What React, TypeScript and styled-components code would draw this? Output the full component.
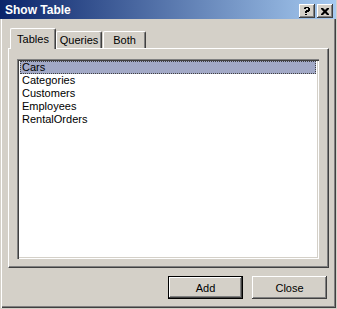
import React, { useState } from "react";
import styled, { createGlobalStyle } from "styled-components";

const GlobalStyle = createGlobalStyle`
  html, body {
    margin: 0;
    padding: 0;
    background: #d4d0c8;
  }
  body {
    font-family: "Liberation Sans", Arial, sans-serif;
    font-size: 11px;
    color: #000;
  }
`;

const Window = styled.div`
  width: 336px;
  height: 308px;
  box-sizing: border-box;
  background: #d4d0c8;
  display: flex;
  flex-direction: column;
  box-shadow: inset 1px 0 #d4d0c8, inset 2px 0 #fff, inset -1px -1px #404040,
    inset -2px -2px #808080;
`;

const TitleBar = styled.div`
  height: 19px;
  display: flex;
  align-items: center;
  padding-left: 5px;
  padding-right: 3px;
  background: linear-gradient(to right, #0a246a, #a6caf0);
  color: #fff;
  font-weight: bold;
  font-size: 12px;
`;

const Title = styled.span`
  flex: 1;
  margin-top: 1px;
`;

const CaptionButtons = styled.div`
  display: flex;
  gap: 2px;
  margin-top: 3px;
`;

const CaptionButton = styled.div`
  width: 16px;
  height: 14px;
  box-sizing: border-box;
  background: #d4d0c8;
  display: flex;
  align-items: center;
  justify-content: center;
  box-shadow: inset -1px -1px #404040, inset 1px 1px #fff,
    inset -2px -2px #808080;
  svg {
    display: block;
  }
`;

const Body = styled.div`
  flex: 1;
  display: flex;
  flex-direction: column;
  padding: 9px 8px 0 8px;
`;

const TabRow = styled.div`
  display: flex;
  align-items: flex-end;
  padding-left: 2px;
  height: 20px;
  position: relative;
  z-index: 1;
`;

const Tab = styled.div<{ $active?: boolean; $w: number; $ml?: number }>`
  width: ${(p) => p.$w}px;
  margin-left: ${(p) => p.$ml || 0}px;
  height: ${(p) => (p.$active ? 21 : 17)}px;
  margin-bottom: ${(p) => (p.$active ? -1 : 0)}px;
  box-sizing: border-box;
  background: #d4d0c8;
  border-top: 1px solid #fff;
  border-left: 1px solid #fff;
  border-right: 1px solid #404040;
  border-radius: 2px 2px 0 0;
  box-shadow: inset -1px 0 #808080;
  display: flex;
  justify-content: center;
  padding-top: ${(p) => (p.$active ? 4 : 2)}px;
  font-size: 11px;
  cursor: default;
`;

const Panel = styled.div`
  width: 321px;
  height: 220px;
  box-sizing: border-box;
  border-top: 1px solid #fff;
  border-left: 1px solid #fff;
  border-right: 1px solid #404040;
  border-bottom: 1px solid #404040;
  box-shadow: inset -1px -1px #808080;
  padding: 10px 9px 9px 8px;
`;

const ListBox = styled.div`
  width: 302px;
  height: 200px;
  box-sizing: border-box;
  background: #fff;
  padding: 2px;
  box-shadow: inset 1px 1px #808080, inset 2px 2px #404040,
    inset -1px -1px #fff, inset -2px -2px #d4d0c8;
`;

const Item = styled.div<{ $selected?: boolean }>`
  height: 13px;
  line-height: 13px;
  padding-left: 2px;
  margin-left: 1px;
  margin-right: 1px;
  box-sizing: border-box;
  background: ${(p) => (p.$selected ? "#a2a9c6" : "transparent")};
  outline: ${(p) => (p.$selected ? "1px dotted #404040" : "none")};
  outline-offset: -1px;
  white-space: nowrap;
`;

const ButtonRow = styled.div`
  display: flex;
  justify-content: flex-end;
  gap: 9px;
  margin-top: 8px;
  padding-right: 1px;
`;

const Button = styled.button<{ $default?: boolean }>`
  width: 75px;
  height: 23px;
  box-sizing: border-box;
  background: #d4d0c8;
  border: ${(p) => (p.$default ? "1px solid #000" : "none")};
  padding: 0;
  font-family: "Liberation Sans", Arial, sans-serif;
  font-size: 11px;
  color: #000;
  box-shadow: ${(p) =>
    p.$default
      ? "inset -1px -1px #404040, inset 1px 1px #fff, inset -2px -2px #808080"
      : "inset -1px -1px #404040, inset 1px 1px #fff, inset -2px -2px #808080, inset 2px 2px #d4d0c8"};
`;

const tables = ["Cars", "Categories", "Customers", "Employees", "RentalOrders"];

export default function App() {
  const [selected, setSelected] = useState(0);

  return (
    <>
      <GlobalStyle />
      <Window>
        <TitleBar>
          <Title>Show Table</Title>
          <CaptionButtons>
            <CaptionButton>
              <svg width="8" height="8" viewBox="0 0 8 8">
                <path
                  d="M1 0h5v1h1v3h-1v1h-2v1h-2v-2h1v-1h2v-2h-2v1h-2v-1h1z M2 7h2v1h-2z"
                  fill="#000"
                />
              </svg>
            </CaptionButton>
            <CaptionButton>
              <svg width="8" height="7" viewBox="0 0 8 7">
                <path
                  d="M0 0h2l2 2 2-2h2v1l-2.5 2.5L8 6v1h-2l-2-2-2 2H0v-1l2.5-2.5L0 1z"
                  fill="#000"
                />
              </svg>
            </CaptionButton>
          </CaptionButtons>
        </TitleBar>
        <Body>
          <TabRow>
            <Tab $active $w={46}>Tables</Tab>
            <Tab $w={46}>Queries</Tab>
            <Tab $w={43} $ml={1}>
              Both
            </Tab>
          </TabRow>
          <Panel>
            <ListBox>
              {tables.map((t, i) => (
                <Item
                  key={t}
                  $selected={i === selected}
                  onClick={() => setSelected(i)}
                >
                  {t}
                </Item>
              ))}
            </ListBox>
          </Panel>
          <ButtonRow>
            <Button $default>Add</Button>
            <Button>Close</Button>
          </ButtonRow>
        </Body>
      </Window>
    </>
  );
}
